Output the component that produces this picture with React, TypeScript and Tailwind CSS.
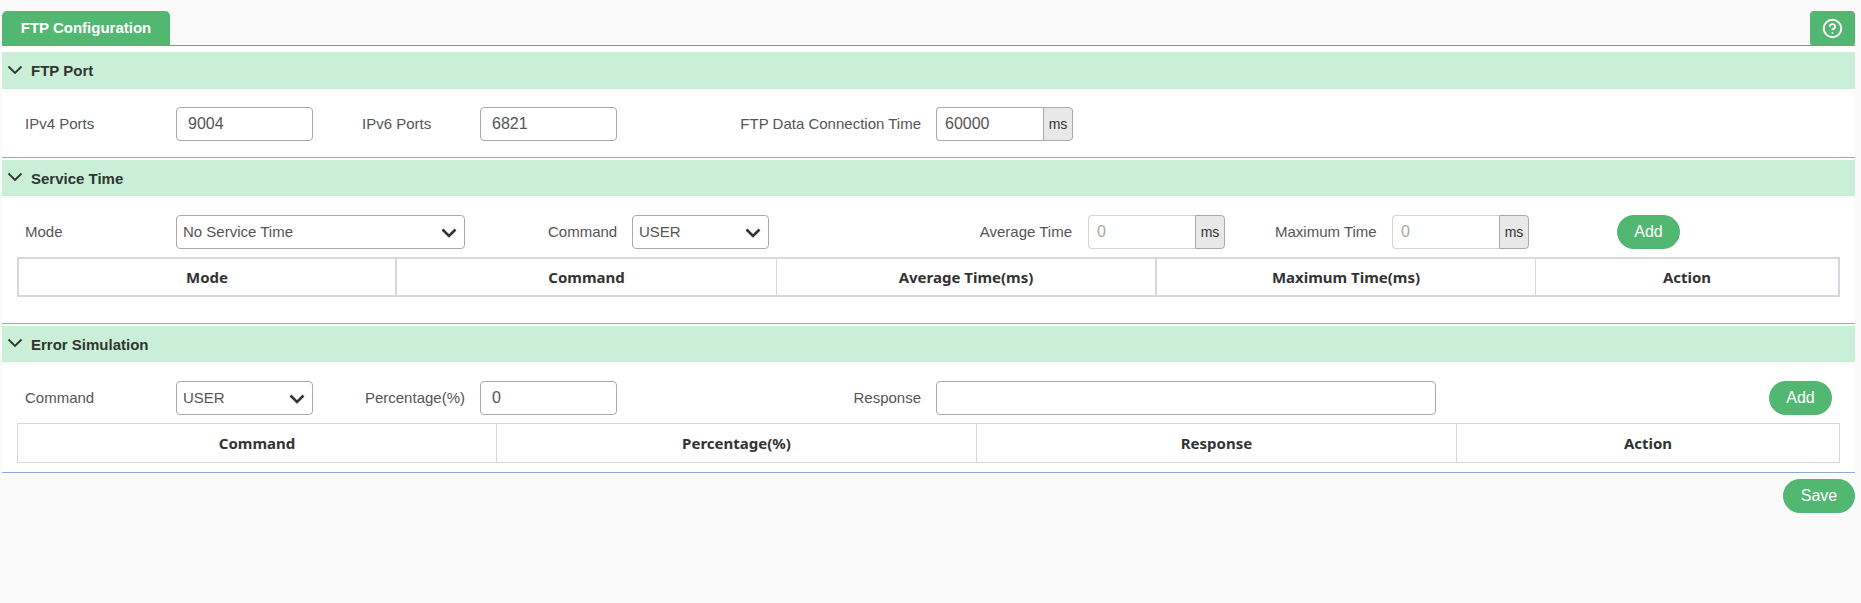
import React from 'react';
import { CircleHelp } from 'lucide-react';

const SectionHeader = ({ title, tall }: { title: string; tall?: boolean }) => (
  <div className={`${tall ? 'h-[37px]' : 'h-[36px]'} bg-[#c9f0d6] flex items-center pl-[5px] text-[15px] font-bold text-[#333] [font-family:'Liberation_Sans',Arial,sans-serif]`}>
    <svg width="16" height="10" viewBox="0 0 16 10" fill="none" stroke="#333" strokeWidth="1.8" className="mr-[8px] mb-[2px]">
      <path d="M1.5 1.5 8 8l6.5-6.5" />
    </svg>
    <span className="pt-[2px]">{title}</span>
  </div>
);

const Label = ({ children, className }: { children: string; className: string }) => (
  <label className={`text-[15px] text-[#555] shrink-0 pt-[1px] ${className}`}>{children}</label>
);

const TextInput = ({ value, className }: { value: string; className: string }) => (
  <input
    readOnly
    value={value}
    className={`h-[34px] shrink-0 rounded-[4px] border border-[#a9a9a9] bg-white pl-[11px] text-[16px] text-[#555] outline-none ${className}`}
  />
);

const UnitInput = ({ value, disabled }: { value: string; disabled?: boolean }) => (
  <div className="flex h-[34px] w-[137px] shrink-0">
    <input
      readOnly
      value={value}
      className={`w-[107px] rounded-l-[4px] border border-r-0 bg-white pl-[8px] text-[16px] outline-none ${disabled ? 'border-[#d4d4d4] text-[#aaa]' : 'border-[#a9a9a9] text-[#555]'}`}
    />
    <span className="flex-1 flex items-center justify-center rounded-r-[4px] border border-[#a9a9a9] bg-[#e8e8e8] text-[14px] text-[#333]">ms</span>
  </div>
);

const Select = ({ value, className }: { value: string; className: string }) => (
  <div className={`relative h-[34px] shrink-0 ${className}`}>
    <select
      value={value}
      onChange={() => {}}
      className="h-full w-full appearance-none rounded-[4px] border border-[#a9a9a9] bg-white pl-[6px] text-[15px] text-[#555] outline-none"
    >
      <option>{value}</option>
    </select>
    <svg width="16" height="10" viewBox="0 0 16 10" fill="none" stroke="#333" strokeWidth="2.6" className="absolute right-[8px] top-[13px] pointer-events-none">
      <path d="M1.5 1.5 8 8l6.5-6.5" />
    </svg>
  </div>
);

const PillButton = ({ children, className }: { children: string; className: string }) => (
  <button className={`h-[34px] rounded-full bg-[#52b771] text-[16px] text-white shrink-0 ${className}`}>{children}</button>
);

const HeaderCell = ({ children, last, thick }: { children: string; last?: boolean; thick?: boolean }) => (
  <div className={`flex items-center justify-center text-[15px] font-bold text-[#333] [font-family:'Noto_Sans',sans-serif] ${last ? '' : thick ? 'border-r-2 border-[#d5d8e0]' : 'border-r border-[#d5d8e0]'}`}>
    {children}
  </div>
);

export default function App() {
  return (
    <div className="min-h-[603px] bg-[#fafafa] pl-[2px] pr-[6px] pt-[11px] text-[#555] [font-family:'Liberation_Sans',Arial,sans-serif]">
      {/* Tab bar */}
      <div className="flex justify-between h-[35px] border-b border-[#52b771]">
        <div className="w-[168px] h-[34px] rounded-t-[5px] bg-[#52b771] flex items-center justify-center text-[15px] font-bold text-white">
          FTP Configuration
        </div>
        <button className="w-[45px] h-[35px] rounded-[4px] bg-[#52b771] flex items-center justify-center text-white">
          <CircleHelp size={21} strokeWidth={2.2} />
        </button>
      </div>

      <div className="bg-white pt-[6px]">
        {/* FTP Port */}
        <SectionHeader title="FTP Port" tall />
        <div className="h-[69px] border-b border-[#8caad2] flex items-center pl-[22px] pt-[2px]">
          <Label className="w-[152px] pl-[1px]">IPv4 Ports</Label>
          <TextInput value="9004" className="w-[137px]" />
          <Label className="ml-[49px] w-[118px]">IPv6 Ports</Label>
          <TextInput value="6821" className="w-[137px]" />
          <Label className="w-[304px] text-right">FTP Data Connection Time</Label>
          <div className="ml-[15px]"><UnitInput value="60000" /></div>
        </div>
      </div>

      <div className="h-[2px] bg-white" />

      {/* Service Time */}
      <div className="bg-white">
        <SectionHeader title="Service Time" />
        <div className="h-[2px] bg-[#fafafa]" />
        <div className="h-[126px] pt-[17px] border-b border-[#8caad2]">
          <div className="flex items-center h-[34px] pl-[22px]">
            <Label className="w-[152px] pl-[1px]">Mode</Label>
            <Select value="No Service Time" className="w-[289px]" />
            <Label className="ml-[83px] w-[84px]">Command</Label>
            <Select value="USER" className="w-[137px]" />
            <Label className="w-[303px] text-right">Average Time</Label>
            <div className="ml-[16px]"><UnitInput value="0" disabled /></div>
            <Label className="ml-[50px] w-[117px]">Maximum Time</Label>
            <UnitInput value="0" disabled />
            <PillButton className="ml-[88px] w-[63px]">Add</PillButton>
          </div>
          <div className="ml-[15px] mt-[8px] w-[1823px] h-[40px] border-2 border-[#d5d8e0] grid grid-cols-[378px_380px_380px_379px_1fr]">
            <HeaderCell thick>Mode</HeaderCell>
            <HeaderCell>Command</HeaderCell>
            <HeaderCell thick>Average Time(ms)</HeaderCell>
            <HeaderCell>Maximum Time(ms)</HeaderCell>
            <HeaderCell last>Action</HeaderCell>
          </div>
        </div>
      </div>

      <div className="h-[2px] bg-white" />

      {/* Error Simulation */}
      <div className="bg-white">
        <SectionHeader title="Error Simulation" />
        <div className="h-[2px] bg-[#fafafa]" />
        <div className="h-[109px] pt-[17px] border-b border-[#8caad2]">
          <div className="flex items-center h-[34px] pl-[22px]">
            <Label className="w-[152px] pl-[1px]">Command</Label>
            <Select value="USER" className="w-[137px]" />
            <Label className="w-[167px] text-right pr-[15px]">Percentage(%)</Label>
            <TextInput value="0" className="w-[137px]" />
            <Label className="w-[304px] text-right">Response</Label>
            <TextInput value="" className="ml-[15px] w-[500px]" />
            <PillButton className="ml-[333px] w-[63px]">Add</PillButton>
          </div>
          <div className="ml-[15px] mt-[8px] w-[1823px] h-[40px] border border-[#d5d8e0] grid grid-cols-[479px_480px_480px_1fr]">
            <HeaderCell>Command</HeaderCell>
            <HeaderCell>Percentage(%)</HeaderCell>
            <HeaderCell>Response</HeaderCell>
            <HeaderCell last>Action</HeaderCell>
          </div>
        </div>
      </div>

      <div className="flex justify-end mt-[6px]">
        <PillButton className="w-[72px]">Save</PillButton>
      </div>
    </div>
  );
}
